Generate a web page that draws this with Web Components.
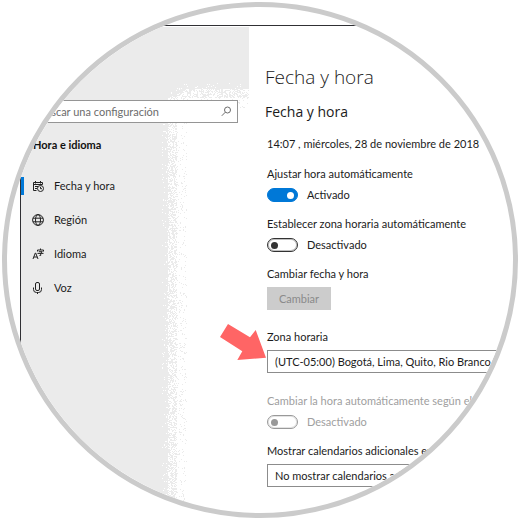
<!DOCTYPE html>
<html lang="es">
<head>
<meta charset="utf-8">
<meta name="viewport" content="width=device-width, initial-scale=1">
<title>Fecha y hora</title>
<style>
  body {
    margin: 0;
    background: #fff;
    color: #1b1b1b;
    font: 11px/16px Lato, "Open Sans", sans-serif;
  }
</style>
</head>
<body>
<round-frame>
  <settings-window>
    <settings-sidebar slot="side" heading="Hora e idioma">
      <nav-item icon="calendar" current>Fecha y hora</nav-item>
      <nav-item icon="globe">Región</nav-item>
      <nav-item icon="language">Idioma</nav-item>
      <nav-item icon="mic">Voz</nav-item>
    </settings-sidebar>
    <settings-page heading="Fecha y hora" subheading="Fecha y hora">
      <span slot="intro">14:07 , miércoles, 28 de noviembre de 2018</span>
      <toggle-setting label="Ajustar hora automáticamente" checked></toggle-setting>
      <toggle-setting label="Establecer zona horaria automáticamente"></toggle-setting>
      <button-setting label="Cambiar fecha y hora" action="Cambiar"></button-setting>
      <select-setting label="Zona horaria" value="(UTC-05:00) Bogotá, Lima, Quito, Rio Branco"><pointer-arrow></pointer-arrow></select-setting>
      <toggle-setting label="Cambiar la hora automáticamente según el" disabled></toggle-setting>
      <select-setting label="Mostrar calendarios adicionales en" value="No mostrar calendarios adicionales"></select-setting>
    </settings-page>
  </settings-window>
</round-frame>

<script>
const ICONS = {
  calendar: '<path d="M4.5 10.5h-3v-8h9v2M1.5 4.5h9M3.5 1v2.500M8.500 1v2.500M3 6.500h3M3 8.500h2"/><circle cx="8.500" cy="8.500" r="3"/><path d="M8.500 6.800v1.900h1.500"/>',
  globe: '<circle cx="6" cy="6" r="5.400"/><ellipse cx="6" cy="6" rx="2.500" ry="5.400"/><path d="M1 4.200h10M1 7.800h10"/>',
  language: '<path d="M1 11l2.300-6h.4L6 11M1.800 9h3.400"/><path d="M8.500.5v1.500M5.500 3.500V2h6v1.500M6.800 3.700h3.500L8.700 5v2.500H7.500M5.500 5.400h6"/>',
  mic: '<rect x="3.500" y=".5" width="4" height="8" rx="1.500"/><path d="M1.500 5.500v2a3 3 0 0 0 3 3h2a3 3 0 0 0 3-3v-2M5.500 10.500V12"/>'
};

class RoundFrame extends HTMLElement {
  constructor() {
    super();
    this.attachShadow({ mode: 'open' }).innerHTML = `
      <style>
        :host {
          display: block;
          box-sizing: border-box;
          width: calc(100vw - 4px);
          aspect-ratio: 1;
          min-height: 0;
          margin: 2px;
          padding: 18px 0 0 13px;
          border: 5px solid #cbcbcb;
          border-radius: 50%;
          overflow: hidden;
        }
      </style>
      <slot></slot>
    `;
  }
}

class SettingsWindow extends HTMLElement {
  constructor() {
    super();
    this.attachShadow({ mode: 'open' }).innerHTML = `
      <style>
        :host {
          display: grid;
          grid-template-columns: 228px minmax(0, 1fr);
          height: 100%;
          border: solid #303034;
          border-width: 1px 0 0 1px;
          padding: 1px 0 0 0;
        }
      </style>
      <slot name="side"></slot>
      <slot></slot>
    `;
  }
}

class SettingsSidebar extends HTMLElement {
  constructor() {
    super();
    this.attachShadow({ mode: 'open' });
  }

  connectedCallback() {
    this.shadowRoot.innerHTML = `
      <style>
        :host { display: block; position: relative; }
        .grain { position: absolute; inset: 0; width: 100%; height: 100%; }
        .content { position: relative; padding: 73px 11px 0 0; }
        .search {
          display: flex;
          align-items: center;
          box-sizing: border-box;
          height: 23px;
          margin-left: 8px;
          padding: 0 5px 0 8px;
          border: 1px solid #959595;
          background: #fff;
        }
        input {
          flex: 1;
          min-width: 0;
          padding: 0;
          border: 0;
          outline: 0;
          background: none;
          font: inherit;
        }
        input::placeholder { color: #6c6c6c; opacity: 1; }
        .search svg { width: 11px; height: 11px; }
        h2 { margin: 14px 0 24px 12px; font: inherit; font-weight: 700; color: #111; }
      </style>
      <svg class="grain" aria-hidden="true" shape-rendering="crispEdges"><path fill="#ebebeb"/></svg>
      <div class="content">
        <div class="search">
          <input type="search" aria-label="Buscar una configuración" placeholder="Buscar una configuración">
          <svg viewBox="0 0 11 11" fill="none" stroke="#6b6b6b"><circle cx="6.500" cy="4" r="3"/><path d="M4.300 6.200L.8 9.800"/></svg>
        </div>
        <h2>${this.getAttribute('heading')}</h2>
        <nav><slot></slot></nav>
      </div>
    `;
    this.shadowRoot.querySelector('.grain path').setAttribute('d', this.grain());
  }

  // solid grey that breaks up into single pixels towards its edges
  grain() {
    let seed = 7;
    const random = () => (seed = (seed * 16807) % 2147483647) / 2147483647;
    const cover = (d) => {
      if (d < 0) return 1;
      if (d < 6) return 0.93;
      if (d < 15) return 0.5;
      return d < 25 ? 0.09 : 0;
    };
    let d = 'M0 0H228V53H0zM0 53H139V700H0z';
    for (let y = 53; y < 700; y++) {
      for (let x = 139; x < 228; x++) {
        const right = x - 141;
        const below = y - 56 - Math.max(0, 165 - x) / 2;
        if (random() < cover(Math.min(right, below))) d += `M${x} ${y}h1v1h-1z`;
      }
    }
    return d;
  }
}

class NavItem extends HTMLElement {
  constructor() {
    super();
    this.attachShadow({ mode: 'open' });
  }

  connectedCallback() {
    const current = this.hasAttribute('current');
    this.shadowRoot.innerHTML = `
      <style>
        :host { display: block; }
        a {
          display: flex;
          align-items: center;
          gap: 10px;
          height: 18px;
          margin-bottom: 16px;
          padding-left: 8px;
          border-left: 3px solid transparent;
          color: inherit;
          text-decoration: none;
        }
        a[aria-current] { border-color: #0078d7; }
        svg { width: 12px; height: 12px; fill: none; stroke: #222; }
      </style>
      <a href="#"${current ? ' aria-current="page"' : ''}>
        <svg viewBox="0 0 12 12" aria-hidden="true">${ICONS[this.getAttribute('icon')]}</svg>
        <slot></slot>
      </a>
    `;
  }
}

class SettingsPage extends HTMLElement {
  constructor() {
    super();
    this.attachShadow({ mode: 'open' });
  }

  connectedCallback() {
    this.shadowRoot.innerHTML = `
      <style>
        :host { display: block; padding: 36px 0 0 16px; }
        h1, h2 { font-family: "Open Sans", "Noto Sans", sans-serif; }
        h1 { margin: 0; font-size: 19px; font-weight: 300; line-height: 28px; }
        h2 { margin: 10px 0 13px; font-size: 14px; font-weight: 400; line-height: 22px; }
        .settings { display: flex; flex-direction: column; gap: 14px; padding-left: 2px; }
      </style>
      <h1>${this.getAttribute('heading')}</h1>
      <h2>${this.getAttribute('subheading')}</h2>
      <div class="settings">
        <slot name="intro"></slot>
        <slot></slot>
      </div>
    `;
  }
}

class ToggleSetting extends HTMLElement {
  constructor() {
    super();
    this.attachShadow({ mode: 'open' });
  }

  connectedCallback() {
    const checked = this.hasAttribute('checked');
    const disabled = this.hasAttribute('disabled');
    this.shadowRoot.innerHTML = `
      <style>
        :host { display: block; white-space: nowrap; }
        :host([disabled]) { color: #a0a0a0; }
        .name { margin-bottom: 6px; }
        label { display: flex; align-items: center; gap: 9px; height: 14px; }
        input {
          appearance: none;
          display: flex;
          align-items: center;
          box-sizing: border-box;
          width: 31px;
          height: 14px;
          margin: 0;
          padding: 0 3px;
          border: 1px solid #333;
          border-radius: 7px;
          box-shadow: inset 0 0 0 1px #8888;
        }
        input::before {
          content: "";
          width: 7px;
          height: 7px;
          border-radius: 50%;
          background: #333;
        }
        input:checked { justify-content: flex-end; border-color: #0078d7; background: #0078d7; box-shadow: none; }
        input:checked::before { background: #fff; }
        input:disabled { border-color: #999; box-shadow: inset 0 0 0 1px #ccc8; }
        input:disabled::before { background: #999; }
      </style>
      <div class="name" id="name">${this.getAttribute('label')}</div>
      <label>
        <input type="checkbox" role="switch" aria-describedby="name"${checked ? ' checked' : ''}${disabled ? ' disabled' : ''}>
        <span class="state"></span>
      </label>
    `;
    const input = this.shadowRoot.querySelector('input');
    const state = this.shadowRoot.querySelector('.state');
    const update = () => {
      state.textContent = input.checked ? 'Activado' : 'Desactivado';
    };
    input.addEventListener('change', update);
    update();
  }
}

class ButtonSetting extends HTMLElement {
  constructor() {
    super();
    this.attachShadow({ mode: 'open' });
  }

  connectedCallback() {
    this.shadowRoot.innerHTML = `
      <style>
        :host { display: block; margin-bottom: 5px; }
        div { margin-bottom: 5px; }
        button {
          display: block;
          height: 23px;
          min-width: 64px;
          padding: 0 8px;
          border: 0;
          background: #ccc;
          color: #8a8a8a;
          font: inherit;
        }
      </style>
      <div id="name">${this.getAttribute('label')}</div>
      <button type="button" aria-describedby="name" disabled>${this.getAttribute('action')}</button>
    `;
  }
}

class SelectSetting extends HTMLElement {
  constructor() {
    super();
    this.attachShadow({ mode: 'open' });
  }

  connectedCallback() {
    this.shadowRoot.innerHTML = `
      <style>
        :host { display: block; position: relative; margin-bottom: 6px; white-space: nowrap; }
        label { display: block; margin-bottom: 5px; }
        select {
          appearance: none;
          display: block;
          box-sizing: border-box;
          width: 100%;
          height: 23px;
          padding: 0 7px;
          border: 1px solid #8c8c8c;
          border-radius: 0;
          background: #fff;
          color: inherit;
          font: inherit;
        }
      </style>
      <label for="choice">${this.getAttribute('label')}</label>
      <select id="choice"><option>${this.getAttribute('value')}</option></select>
      <slot></slot>
    `;
  }
}

class PointerArrow extends HTMLElement {
  constructor() {
    super();
    this.attachShadow({ mode: 'open' }).innerHTML = `
      <style>
        :host { position: absolute; top: -5px; left: -47px; }
        svg { display: block; width: 46px; height: 36px; }
      </style>
      <svg viewBox="0 0 46 36" aria-hidden="true"><path fill="#ff6565" d="M8 0l22 13.300L35.700 6 46 33.700 17.300 36l5-8.700L0 13z"/></svg>
    `;
  }
}

customElements.define('round-frame', RoundFrame);
customElements.define('settings-window', SettingsWindow);
customElements.define('settings-sidebar', SettingsSidebar);
customElements.define('nav-item', NavItem);
customElements.define('settings-page', SettingsPage);
customElements.define('toggle-setting', ToggleSetting);
customElements.define('button-setting', ButtonSetting);
customElements.define('select-setting', SelectSetting);
customElements.define('pointer-arrow', PointerArrow);
</script>
</body>
</html>
